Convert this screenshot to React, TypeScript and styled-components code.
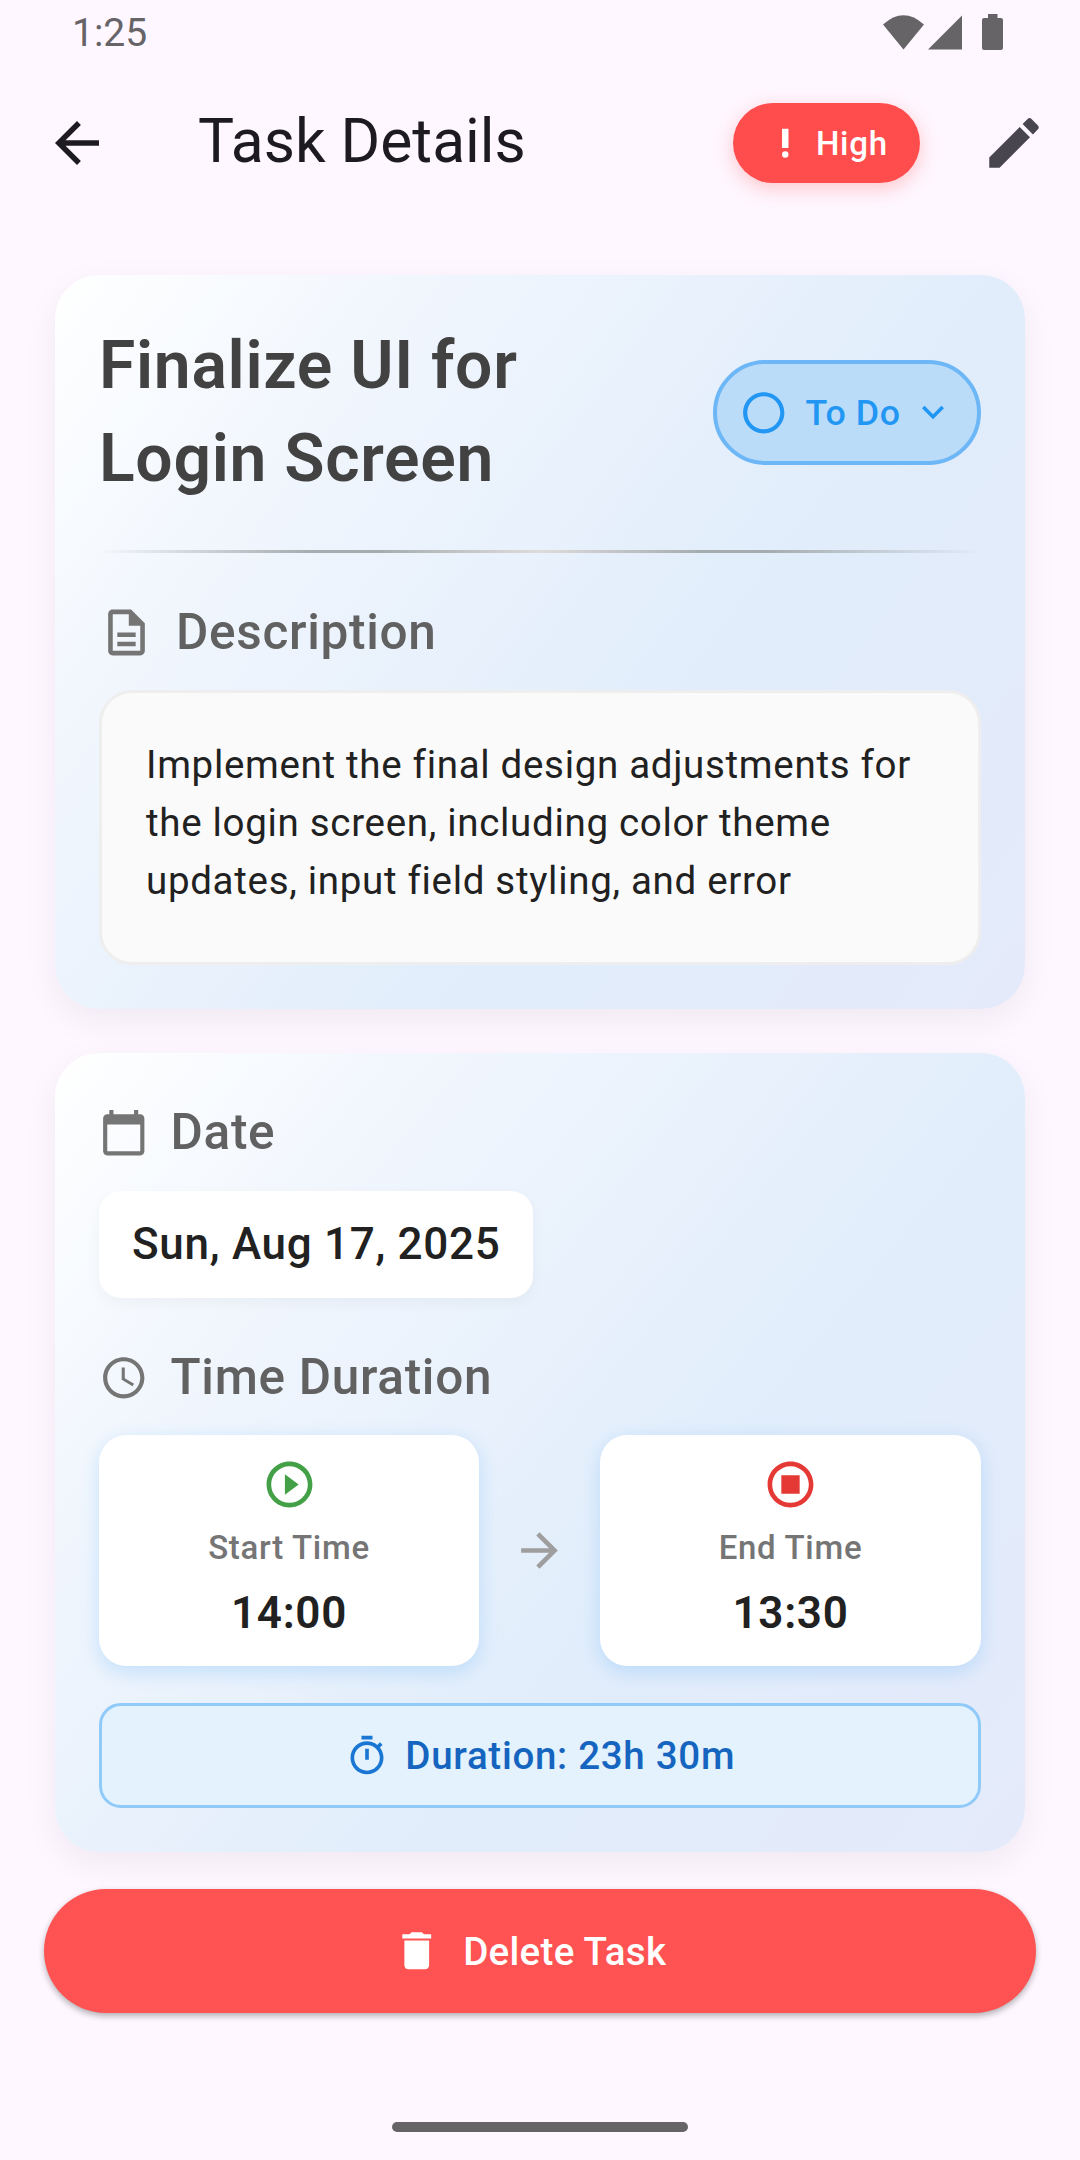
import React from "react";
import styled, { createGlobalStyle } from "styled-components";

const Global = createGlobalStyle`
  * { box-sizing: border-box; }
  body { margin: 0; background: #fef7ff; }
  button { font: inherit; border: 0; padding: 0; background: none; }
`;

const Screen = styled.main`
  width: 1080px;
  height: 2160px;
  display: flex;
  flex-direction: column;
  background: #fef7ff;
  color: #212121;
  font-family: Roboto, "Liberation Sans", sans-serif;
  overflow: hidden;
`;

const StatusBar = styled.div`
  height: 66px;
  padding: 0 76px 2px 72px;
  display: flex;
  align-items: center;
  justify-content: space-between;
  color: #676468;
  font-size: 39px;
`;

const Clock = styled.span`
  padding-top: 2px;
  line-height: 46px;
`;

const AppBar = styled.header`
  height: 154px;
  padding: 0 33px 0 44px;
  display: flex;
  align-items: center;
  color: #1d1b20;
`;

const PageTitle = styled.h1`
  margin: 0 auto 0 88px;
  padding-bottom: 3px;
  font-size: 60.5px;
  line-height: 77px;
  font-weight: 400;
`;

const PriorityBadge = styled.div`
  width: 187px;
  height: 80px;
  margin-right: 61px;
  padding-left: 33px;
  display: flex;
  align-items: center;
  gap: 11.5px;
  border-radius: 40px;
  background: #ff4d4d;
  color: #fff;
  font-size: 33px;
  font-weight: 500;
  letter-spacing: 0.7px;
  white-space: nowrap;
  box-shadow: 0 5.5px 19px rgba(255, 82, 82, 0.3);
`;

const Icon = styled.svg<{ $size: number; $color?: string }>`
  flex: none;
  display: block;
  width: ${(p) => p.$size}px;
  height: ${(p) => p.$size}px;
  fill: currentColor;
  color: ${(p) => p.$color ?? "inherit"};
`;

const Content = styled.div`
  padding: 55px 55px 0;
  display: flex;
  flex-direction: column;
  gap: 44px;
`;

const Card = styled.section<{ $height: number; $angle: number }>`
  height: ${(p) => p.$height}px;
  padding: 44px;
  border-radius: 44px;
  background: linear-gradient(${(p) => p.$angle}deg, #ffffff 0%, #eff5fd 28%, #e1edfb 62%, #e4eafa 100%);
  box-shadow: 0 11px 34px rgba(0, 0, 0, 0.06);
`;

const TaskHeader = styled.div`
  display: flex;
  align-items: center;
  justify-content: space-between;
`;

const TaskName = styled.h2`
  width: 570px;
  margin: 0;
  color: #424242;
  font-size: 66px;
  line-height: 93.3px;
  font-weight: 600;
  letter-spacing: 0.7px;
`;

const StatusChip = styled.button`
  width: 268px;
  height: 105px;
  padding: 0 22px;
  display: flex;
  align-items: center;
  border: 4px solid #6db7f7;
  border-radius: 53px;
  background: #bbdcf9;
  color: #2196f3;
  font-size: 35.75px;
  font-weight: 500;
  letter-spacing: 0.6px;
  white-space: nowrap;
`;

const ChipLabel = styled.span`
  margin: 1px auto 0 17px;
`;

const Divider = styled.div`
  height: 3px;
  margin: 44px 0;
  background: linear-gradient(
    90deg,
    rgba(166, 173, 176, 0),
    #a6adb0 24%,
    #a6adb0 32%,
    #dedcda 50%,
    #a6adb0 68%,
    #a6adb0 76%,
    rgba(166, 173, 176, 0)
  );
`;

const SectionHead = styled.div<{ $top?: number }>`
  height: 71.5px;
  margin: ${(p) => p.$top ?? 0}px 0 22px;
  display: flex;
  align-items: center;
  gap: 22px;
  color: #616161;
  font-size: 49.5px;
  line-height: 71px;
  font-weight: 500;
  letter-spacing: 0.7px;
`;

const DescriptionBox = styled.div`
  height: 275px;
  padding: 43px 44px;
  border: 3px solid #eeeeee;
  border-radius: 33px;
  background: #fafafa;
  font-size: 38.5px;
  line-height: 58px;
  letter-spacing: 0.6875px;
  white-space: nowrap;
`;

const DateBox = styled.div`
  width: 434px;
  height: 107px;
  padding: 22px 33px;
  border-radius: 22px;
  background: #fff;
  font-size: 44px;
  line-height: 63px;
  font-weight: 500;
  letter-spacing: 0.7px;
  white-space: nowrap;
  box-shadow: 0 5px 14px rgba(0, 0, 0, 0.04);
`;

const TimeRow = styled.div`
  display: grid;
  grid-template-columns: 380px 55px 381px;
  gap: 33px;
  align-items: center;
`;

const TimeBox = styled.div`
  height: 231px;
  padding-top: 22px;
  display: flex;
  flex-direction: column;
  align-items: center;
  border-radius: 27.5px;
  background: #fff;
  box-shadow: 0 5.5px 19px rgba(33, 150, 243, 0.2);
`;

const TimeLabel = styled.span`
  margin: 12px 0 10.5px;
  color: #757575;
  font-size: 33px;
  line-height: 47px;
  font-weight: 500;
  letter-spacing: 0.7px;
`;

const TimeValue = styled.span`
  font-size: 44px;
  line-height: 63px;
  font-weight: 600;
  letter-spacing: 0.7px;
`;

const DurationBox = styled.div`
  height: 105px;
  margin-top: 37px;
  display: flex;
  align-items: center;
  justify-content: center;
  gap: 16.5px;
  border: 3px solid #90caf9;
  border-radius: 22px;
  background: #e3f2fd;
  color: #1565c0;
  font-size: 38.5px;
  font-weight: 500;
  letter-spacing: 0.7px;
`;

const DeleteButton = styled.button`
  height: 124px;
  margin: 37px 44px 0;
  padding-right: 22px;
  display: flex;
  align-items: center;
  justify-content: center;
  gap: 22px;
  border-radius: 62px;
  background: #ff5252;
  color: #fff;
  font-size: 38.5px;
  font-weight: 500;
  letter-spacing: 0.3px;
  box-shadow: 0 3px 6px rgba(0, 0, 0, 0.3);
`;

const HomeIndicator = styled.div`
  width: 296px;
  height: 10px;
  margin: auto auto 28px;
  border-radius: 5px;
  background: #676468;
`;

const paths = {
  back: "M20 11H7.83l5.59-5.59L12 4l-8 8 8 8 1.41-1.41L7.83 13H20v-2z",
  forward: "M12 4l-1.41 1.41L16.17 11H4v2h12.17l-5.58 5.59L12 20l8-8z",
  edit: "M3 17.25V21h3.75L17.81 9.94l-3.75-3.75L3 17.25zM20.71 7.04c.39-.39.39-1.02 0-1.41l-2.34-2.34a.9959.9959 0 0 0-1.41 0l-1.83 1.83 3.75 3.75 1.83-1.83z",
  priority: "M10 3h4v12h-4zM12 17a2 2 0 1 0 0 4 2 2 0 0 0 0-4z",
  circle: "M12 2C6.48 2 2 6.48 2 12s4.48 10 10 10 10-4.48 10-10S17.52 2 12 2zm0 18c-4.42 0-8-3.58-8-8s3.58-8 8-8 8 3.58 8 8-3.58 8-8 8z",
  chevron: "M7.41 8.59L12 13.17l4.59-4.58L18 10l-6 6-6-6 1.41-1.41z",
  document: "M8 16h8v2H8zm0-4h8v2H8zm6-10H6c-1.1 0-2 .9-2 2v16c0 1.1.89 2 1.99 2H18c1.1 0 2-.9 2-2V8l-6-6zm4 18H6V4h7v5h5v11z",
  calendar: "M20 3h-1V1h-2v2H7V1H5v2H4c-1.1 0-2 .9-2 2v16c0 1.1.9 2 2 2h16c1.1 0 2-.9 2-2V5c0-1.1-.9-2-2-2zm0 18H4V8h16v13z",
  time: "M11.99 2C6.47 2 2 6.48 2 12s4.47 10 9.99 10C17.52 22 22 17.52 22 12S17.52 2 11.99 2zM12 20c-4.42 0-8-3.58-8-8s3.58-8 8-8 8 3.58 8 8-3.58 8-8 8zm.5-13H11v6l5.25 3.15.75-1.23-4.5-2.67z",
  play: "M12 2C6.48 2 2 6.48 2 12s4.48 10 10 10 10-4.48 10-10S17.52 2 12 2zm0 18c-4.41 0-8-3.59-8-8s3.59-8 8-8 8 3.59 8 8-3.59 8-8 8zM10 16.5l6-4.5-6-4.5z",
  stop: "M12 2C6.48 2 2 6.48 2 12s4.48 10 10 10 10-4.48 10-10S17.52 2 12 2zm0 18c-4.42 0-8-3.58-8-8s3.58-8 8-8 8 3.58 8 8-3.58 8-8 8zM8 8h8v8H8z",
  timer: "M15 1H9v2h6V1zm-4 13h2V8h-2v6zm8.03-6.61l1.42-1.42c-.43-.51-.9-.99-1.41-1.41l-1.42 1.42C16.07 4.74 14.12 4 12 4c-4.97 0-9 4.03-9 9s4.02 9 9 9 9-4.03 9-9c0-2.12-.74-4.07-1.97-5.61zM12 20c-3.87 0-7-3.13-7-7s3.13-7 7-7 7 3.13 7 7-3.13 7-7 7z",
  trash: "M6 19c0 1.1.9 2 2 2h8c1.1 0 2-.9 2-2V7H6v12zM19 4h-3.5l-1-1h-5l-1 1H5v2h14V4z",
};

function Glyph({ name, size, color }: { name: keyof typeof paths; size: number; color?: string }) {
  return (
    <Icon viewBox="0 0 24 24" $size={size} $color={color} fillRule="evenodd" aria-hidden>
      <path d={paths[name]} />
    </Icon>
  );
}

function SystemIcons() {
  return (
    <svg width="121" height="38" viewBox="0 0 121 38" fill="currentColor" aria-hidden>
      <path d="M0 11.5Q20.5 -7 41 11.5L20.5 36.5Z" />
      <path d="M45 36.5L79 2.5V36.5Z" />
      <path d="M105 1H114.500V5H118Q120 5 120 7V35Q120 37 118 37H101Q99 37 99 35V7Q99 5 101 5H105Z" />
    </svg>
  );
}

function TimeCard({ label, value, icon, color }: { label: string; value: string; icon: "play" | "stop"; color: string }) {
  return (
    <TimeBox>
      <Glyph name={icon} size={55} color={color} />
      <TimeLabel>{label}</TimeLabel>
      <TimeValue>{value}</TimeValue>
    </TimeBox>
  );
}

export default function App() {
  return (
    <Screen>
      <Global />
      <StatusBar>
        <Clock>1:25</Clock>
        <SystemIcons />
      </StatusBar>
      <AppBar>
        <Glyph name="back" size={66} />
        <PageTitle>Task Details</PageTitle>
        <PriorityBadge>
          <Glyph name="priority" size={38.5} />
          High
        </PriorityBadge>
        <Glyph name="edit" size={66} color="#49454f" />
      </AppBar>
      <Content>
        <Card $height={734} $angle={127.1}>
          <TaskHeader>
            <TaskName>Finalize UI for Login Screen</TaskName>
            <StatusChip>
              <Glyph name="circle" size={49.5} />
              <ChipLabel>To Do</ChipLabel>
              <Glyph name="chevron" size={44} />
            </StatusChip>
          </TaskHeader>
          <Divider />
          <SectionHead>
            <Glyph name="document" size={55} color="#757575" />
            Description
          </SectionHead>
          <DescriptionBox>
            Implement the final design adjustments for
            <br />
            the login screen, including color theme
            <br />
            updates, input field styling, and error
          </DescriptionBox>
        </Card>
        <Card $height={799} $angle={129.5}>
          <SectionHead>
            <Glyph name="calendar" size={49.5} color="#757575" />
            Date
          </SectionHead>
          <DateBox>Sun, Aug 17, 2025</DateBox>
          <SectionHead $top={44}>
            <Glyph name="time" size={49.5} color="#757575" />
            Time Duration
          </SectionHead>
          <TimeRow>
            <TimeCard label="Start Time" value="14:00" icon="play" color="#43a047" />
            <Glyph name="forward" size={55} color="#9e9e9e" />
            <TimeCard label="End Time" value="13:30" icon="stop" color="#e53935" />
          </TimeRow>
          <DurationBox>
            <Glyph name="timer" size={44} color="#1976d2" />
            Duration: 23h 30m
          </DurationBox>
        </Card>
      </Content>
      <DeleteButton>
        <Glyph name="trash" size={49.5} />
        Delete Task
      </DeleteButton>
      <HomeIndicator />
    </Screen>
  );
}
